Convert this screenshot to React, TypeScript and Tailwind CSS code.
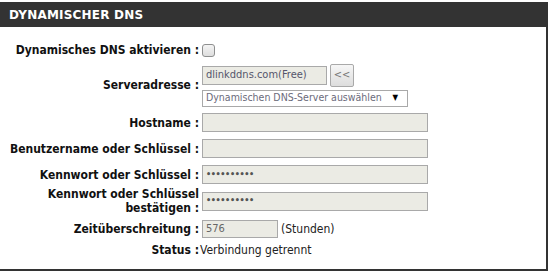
import React from "react";

const labelFont = { fontFamily: '"DejaVu Sans Condensed", "DejaVu Sans", sans-serif' };

function Label({ children }: { children: React.ReactNode }) {
  return (
    <div className="w-[199px] shrink-0 text-right text-[12px] font-bold leading-[14px] text-[#111]" style={labelFont}>
      {children}
    </div>
  );
}

function TextBox({ w, value, dots }: { w: string; value?: string; dots?: boolean }) {
  return (
    <div className={`${w} h-[19px] border border-[#a9a9a9] bg-[#ebebe4] flex items-center pl-[3px] text-[11px] text-[#55556b]`}>
      {dots ? (
        <span className="text-[9px] font-bold tracking-[-0.4px] text-[#555]">••••••••••</span>
      ) : (
        value
      )}
    </div>
  );
}

export default function App() {
  return (
    <div className="w-[548px] h-[272px] bg-white pt-[2px]" style={labelFont}>
      <div className="h-[269px] border-r-2 border-b-2 border-[#333]">
        <div className="h-[25px] bg-[#333] flex items-center pl-[9px] text-white text-[12px] font-bold tracking-[0.2px]" style={{ fontFamily: '"DejaVu Sans", sans-serif' }}>
          DYNAMISCHER DNS
        </div>

        <div className="mt-[13px] flex items-center h-[20px]">
          <Label>Dynamisches DNS aktivieren :</Label>
          <div className="ml-[3px] w-[13px] h-[13px] rounded-[3px] border border-[#8e8f8f] bg-gradient-to-b from-[#f4f4f4] to-[#dedede]" />
        </div>

        <div className="mt-[3px] flex items-center h-[44px]">
          <Label>Serveradresse :</Label>
          <div className="ml-[3px] flex flex-col">
            <div className="flex items-center h-[23px]">
              <TextBox w="w-[125px]" value="dlinkddns.com(Free)" />
              <div className="ml-[3px] w-[24px] h-[23px] rounded-[2px] border border-[#a9a9a9] bg-gradient-to-b from-[#f6f6f6] to-[#dddddd] flex items-center justify-center text-[11px] text-[#777]">
                &lt;&lt;
              </div>
            </div>
            <div className="mt-[3px] w-[206px] h-[17px] border border-[#a9a9a9] bg-white flex items-center justify-between pl-[3px] pr-[9px] text-[10.5px] text-[#6b6b7b]">
              <span>Dynamischen DNS-Server auswählen</span>
              <span className="text-[8px] text-black">▼</span>
            </div>
          </div>
        </div>

        <div className="mt-[6px] flex items-center h-[19px]">
          <Label>Hostname :</Label>
          <div className="ml-[3px]"><TextBox w="w-[226px]" /></div>
        </div>

        <div className="mt-[7px] flex items-center h-[19px]">
          <Label>Benutzername oder Schlüssel :</Label>
          <div className="ml-[3px]"><TextBox w="w-[226px]" /></div>
        </div>

        <div className="mt-[7px] flex items-center h-[19px]">
          <Label>Kennwort oder Schlüssel :</Label>
          <div className="ml-[3px]"><TextBox w="w-[226px]" dots /></div>
        </div>

        <div className="mt-[2px] flex items-center h-[30px]">
          <Label>
            Kennwort oder Schlüssel
            <br />
            bestätigen :
          </Label>
          <div className="ml-[3px]"><TextBox w="w-[226px]" dots /></div>
        </div>

        <div className="mt-[4px] flex items-center h-[18px]">
          <Label>Zeitüberschreitung :</Label>
          <div className="ml-[3px] flex items-center">
            <div className="w-[76px] h-[18px] border border-[#a9a9a9] bg-[#ebebe4] flex items-center pl-[3px] text-[11px] text-[#666]">576</div>
            <span className="ml-[3px] text-[12px] text-[#222]">(Stunden)</span>
          </div>
        </div>

        <div className="mt-[3px] flex items-center h-[18px]">
          <Label>Status :</Label>
          <span className="ml-[1px] text-[12px] text-[#222]">Verbindung getrennt</span>
        </div>
      </div>
    </div>
  );
}
